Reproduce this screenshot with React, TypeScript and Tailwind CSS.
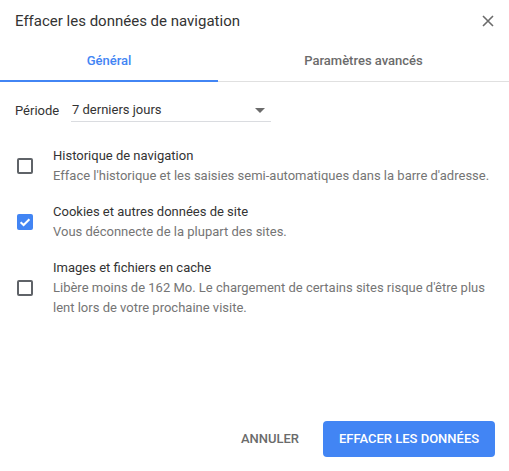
import React from "react";

const font = { fontFamily: "Roboto, 'Liberation Sans', sans-serif" };

function Box({ checked }: { checked?: boolean }) {
  if (checked) {
    return (
      <div className="w-[16px] h-[16px] rounded-[2px] bg-[#4285f4] flex items-center justify-center shrink-0">
        <svg width="14" height="14" viewBox="0 0 14 14">
          <path d="M2.6 7.2 L5.6 10 L11.4 4.2" fill="none" stroke="#fff" strokeWidth="2" />
        </svg>
      </div>
    );
  }
  return <div className="w-[16px] h-[16px] rounded-[2px] border-2 border-[#5f6368] shrink-0" />;
}

function Item({ title, desc, checked }: { title: string; desc: React.ReactNode; checked?: boolean }) {
  return (
    <div className="flex items-center">
      <div className="w-[53px] pl-[17px] flex items-center">
        <Box checked={checked} />
      </div>
      <div className="flex-1 pr-[14px] text-[13px] leading-[20px]">
        <div className="text-[#333333]">{title}</div>
        <div className="text-[#757575]">{desc}</div>
      </div>
    </div>
  );
}

export default function App() {
  return (
    <div className="w-[509px] h-[471px] bg-white flex flex-col" style={font}>
      <div className="h-[42px] flex items-center justify-between pl-[15px] pr-[14px]">
        <div className="text-[15px] text-[#333333] pt-[1px]">Effacer les données de navigation</div>
        <svg width="12" height="12" viewBox="0 0 12 12" className="mr-[1px]">
          <path d="M1 1 L11 11 M11 1 L1 11" stroke="#6b6b6b" strokeWidth="1.6" />
        </svg>
      </div>
      <div className="flex h-[40px] border-b border-[#e0e0e0]">
        <div className="w-[218px] relative flex items-center justify-center pb-[2px] text-[13px] font-medium text-[#4285f4]">
          Général
          <div className="absolute left-0 right-0 bottom-[-1px] h-[2px] bg-[#4285f4]" />
        </div>
        <div className="flex-1 flex items-center justify-center pb-[2px] text-[13px] font-medium text-[#6b6b6b]">
          Paramètres avancés
        </div>
      </div>
      <div className="flex items-center pl-[15px] mt-[17px] text-[13px] text-[#333333]">
        <span className="w-[56px]">Période</span>
        <div className="w-[200px] h-[23px] border-b border-[#dadce0] flex items-center justify-between pl-[1px] pr-[6px]">
          <span>7 derniers jours</span>
          <svg width="10" height="5" viewBox="0 0 10 5">
            <path d="M0 0 L10 0 L5 5 Z" fill="#6b6b6b" />
          </svg>
        </div>
      </div>
      <div className="flex flex-col gap-[16px] mt-[24px]">
        <Item
          title="Historique de navigation"
          desc="Efface l'historique et les saisies semi-automatiques dans la barre d'adresse."
        />
        <Item title="Cookies et autres données de site" desc="Vous déconnecte de la plupart des sites." checked />
        <Item
          title="Images et fichiers en cache"
          desc="Libère moins de 162 Mo. Le chargement de certains sites risque d'être plus lent lors de votre prochaine visite."
        />
      </div>
      <div className="flex-1" />
      <div className="flex justify-end items-center gap-[8px] pr-[14px] pb-[14px]">
        <button className="h-[36px] px-[16px] text-[13px] font-medium text-[#6b6b6b] uppercase">Annuler</button>
        <button className="h-[36px] w-[172px] rounded-[4px] bg-[#4285f4] text-white text-[13px] font-medium">
          EFFACER LES DONNÉES
        </button>
      </div>
    </div>
  );
}
